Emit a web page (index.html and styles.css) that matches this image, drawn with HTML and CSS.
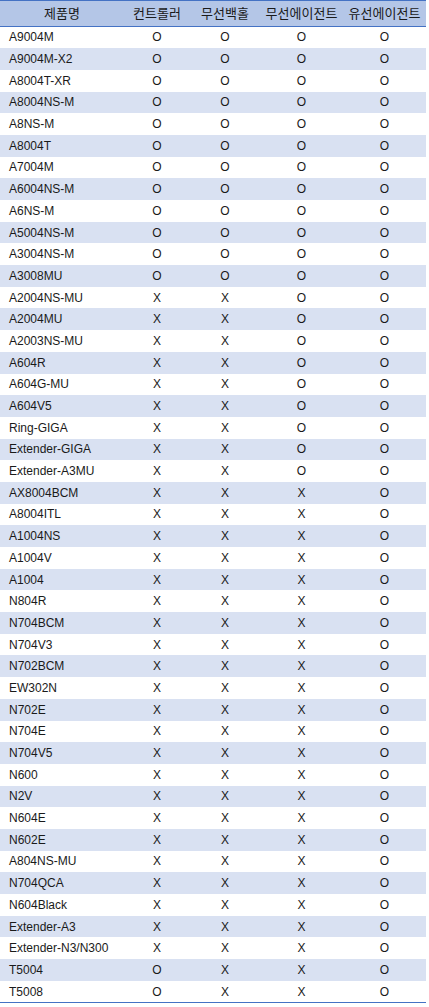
FILE: index.html
```html
<!DOCTYPE html>
<html lang="ko">
<head>
<meta charset="utf-8">
<title>제품 기능 표</title>
<link rel="stylesheet" href="styles.css">
</head>
<body>
<div class="table">
  <div class="row head"><div class="c name">제품명</div><div class="c">컨트롤러</div><div class="c">무선백홀</div><div class="c">무선에이전트</div><div class="c">유선에이전트</div></div>
  <div class="row"><div class="c model">A9004M</div><div class="c">O</div><div class="c">O</div><div class="c">O</div><div class="c">O</div></div>
  <div class="row"><div class="c model">A9004M-X2</div><div class="c">O</div><div class="c">O</div><div class="c">O</div><div class="c">O</div></div>
  <div class="row"><div class="c model">A8004T-XR</div><div class="c">O</div><div class="c">O</div><div class="c">O</div><div class="c">O</div></div>
  <div class="row"><div class="c model">A8004NS-M</div><div class="c">O</div><div class="c">O</div><div class="c">O</div><div class="c">O</div></div>
  <div class="row"><div class="c model">A8NS-M</div><div class="c">O</div><div class="c">O</div><div class="c">O</div><div class="c">O</div></div>
  <div class="row"><div class="c model">A8004T</div><div class="c">O</div><div class="c">O</div><div class="c">O</div><div class="c">O</div></div>
  <div class="row"><div class="c model">A7004M</div><div class="c">O</div><div class="c">O</div><div class="c">O</div><div class="c">O</div></div>
  <div class="row"><div class="c model">A6004NS-M</div><div class="c">O</div><div class="c">O</div><div class="c">O</div><div class="c">O</div></div>
  <div class="row"><div class="c model">A6NS-M</div><div class="c">O</div><div class="c">O</div><div class="c">O</div><div class="c">O</div></div>
  <div class="row"><div class="c model">A5004NS-M</div><div class="c">O</div><div class="c">O</div><div class="c">O</div><div class="c">O</div></div>
  <div class="row"><div class="c model">A3004NS-M</div><div class="c">O</div><div class="c">O</div><div class="c">O</div><div class="c">O</div></div>
  <div class="row"><div class="c model">A3008MU</div><div class="c">O</div><div class="c">O</div><div class="c">O</div><div class="c">O</div></div>
  <div class="row"><div class="c model">A2004NS-MU</div><div class="c">X</div><div class="c">X</div><div class="c">O</div><div class="c">O</div></div>
  <div class="row"><div class="c model">A2004MU</div><div class="c">X</div><div class="c">X</div><div class="c">O</div><div class="c">O</div></div>
  <div class="row"><div class="c model">A2003NS-MU</div><div class="c">X</div><div class="c">X</div><div class="c">O</div><div class="c">O</div></div>
  <div class="row"><div class="c model">A604R</div><div class="c">X</div><div class="c">X</div><div class="c">O</div><div class="c">O</div></div>
  <div class="row"><div class="c model">A604G-MU</div><div class="c">X</div><div class="c">X</div><div class="c">O</div><div class="c">O</div></div>
  <div class="row"><div class="c model">A604V5</div><div class="c">X</div><div class="c">X</div><div class="c">O</div><div class="c">O</div></div>
  <div class="row"><div class="c model">Ring-GIGA</div><div class="c">X</div><div class="c">X</div><div class="c">O</div><div class="c">O</div></div>
  <div class="row"><div class="c model">Extender-GIGA</div><div class="c">X</div><div class="c">X</div><div class="c">O</div><div class="c">O</div></div>
  <div class="row"><div class="c model">Extender-A3MU</div><div class="c">X</div><div class="c">X</div><div class="c">O</div><div class="c">O</div></div>
  <div class="row"><div class="c model">AX8004BCM</div><div class="c">X</div><div class="c">X</div><div class="c">X</div><div class="c">O</div></div>
  <div class="row"><div class="c model">A8004ITL</div><div class="c">X</div><div class="c">X</div><div class="c">X</div><div class="c">O</div></div>
  <div class="row"><div class="c model">A1004NS</div><div class="c">X</div><div class="c">X</div><div class="c">X</div><div class="c">O</div></div>
  <div class="row"><div class="c model">A1004V</div><div class="c">X</div><div class="c">X</div><div class="c">X</div><div class="c">O</div></div>
  <div class="row"><div class="c model">A1004</div><div class="c">X</div><div class="c">X</div><div class="c">X</div><div class="c">O</div></div>
  <div class="row"><div class="c model">N804R</div><div class="c">X</div><div class="c">X</div><div class="c">X</div><div class="c">O</div></div>
  <div class="row"><div class="c model">N704BCM</div><div class="c">X</div><div class="c">X</div><div class="c">X</div><div class="c">O</div></div>
  <div class="row"><div class="c model">N704V3</div><div class="c">X</div><div class="c">X</div><div class="c">X</div><div class="c">O</div></div>
  <div class="row"><div class="c model">N702BCM</div><div class="c">X</div><div class="c">X</div><div class="c">X</div><div class="c">O</div></div>
  <div class="row"><div class="c model">EW302N</div><div class="c">X</div><div class="c">X</div><div class="c">X</div><div class="c">O</div></div>
  <div class="row"><div class="c model">N702E</div><div class="c">X</div><div class="c">X</div><div class="c">X</div><div class="c">O</div></div>
  <div class="row"><div class="c model">N704E</div><div class="c">X</div><div class="c">X</div><div class="c">X</div><div class="c">O</div></div>
  <div class="row"><div class="c model">N704V5</div><div class="c">X</div><div class="c">X</div><div class="c">X</div><div class="c">O</div></div>
  <div class="row"><div class="c model">N600</div><div class="c">X</div><div class="c">X</div><div class="c">X</div><div class="c">O</div></div>
  <div class="row"><div class="c model">N2V</div><div class="c">X</div><div class="c">X</div><div class="c">X</div><div class="c">O</div></div>
  <div class="row"><div class="c model">N604E</div><div class="c">X</div><div class="c">X</div><div class="c">X</div><div class="c">O</div></div>
  <div class="row"><div class="c model">N602E</div><div class="c">X</div><div class="c">X</div><div class="c">X</div><div class="c">O</div></div>
  <div class="row"><div class="c model">A804NS-MU</div><div class="c">X</div><div class="c">X</div><div class="c">X</div><div class="c">O</div></div>
  <div class="row"><div class="c model">N704QCA</div><div class="c">X</div><div class="c">X</div><div class="c">X</div><div class="c">O</div></div>
  <div class="row"><div class="c model">N604Black</div><div class="c">X</div><div class="c">X</div><div class="c">X</div><div class="c">O</div></div>
  <div class="row"><div class="c model">Extender-A3</div><div class="c">X</div><div class="c">X</div><div class="c">X</div><div class="c">O</div></div>
  <div class="row"><div class="c model">Extender-N3/N300</div><div class="c">X</div><div class="c">X</div><div class="c">X</div><div class="c">O</div></div>
  <div class="row"><div class="c model">T5004</div><div class="c">O</div><div class="c">X</div><div class="c">X</div><div class="c">O</div></div>
  <div class="row"><div class="c model">T5008</div><div class="c">O</div><div class="c">X</div><div class="c">X</div><div class="c">O</div></div>
</div>
</body>
</html>
```

FILE: styles.css
```css
html, body {
  margin: 0;
  padding: 0;
  background: #ffffff;
}

.table {
  width: 426px;
  font-family: "Liberation Sans", "Noto Sans CJK KR", sans-serif;
  font-size: 12px;
  color: #1a1a1a;
  border-bottom: 1px solid #4472c4;
}

.row {
  display: grid;
  grid-template-columns: 124px 66px 70px 83px 83px;
  height: 21.7px;
  align-items: center;
}

.row:nth-child(odd) {
  background: #d9e1f2;
}

.row.head {
  height: 24.5px;
  background: #b4c6e7;
  border-top: 1px solid #4472c4;
  border-bottom: 1px solid #4472c4;
  font-family: "Noto Sans CJK KR", sans-serif;
  font-size: 13px;
}

.c {
  text-align: center;
  white-space: nowrap;
  line-height: 16px;
}

.c.model {
  text-align: left;
  padding-left: 9px;
}
```
